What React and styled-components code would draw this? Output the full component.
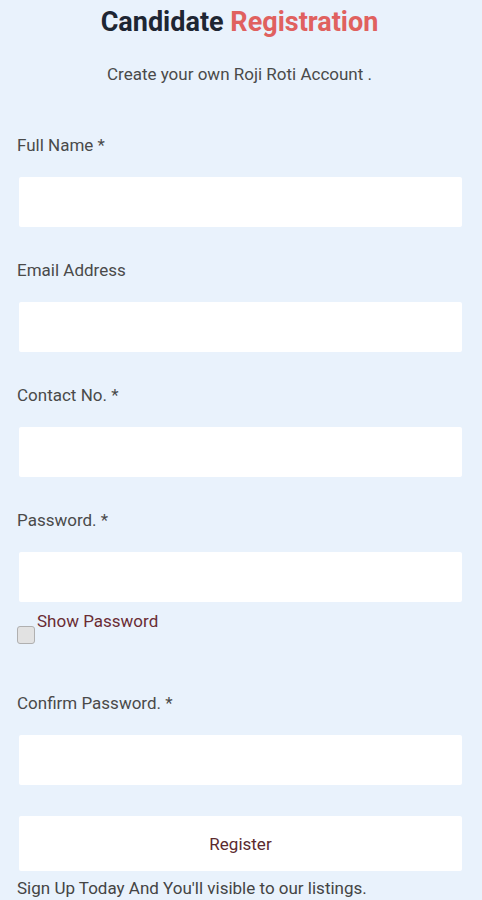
import React, {useState} from 'react'
import styled, {createGlobalStyle} from 'styled-components'

const GlobalStyle = createGlobalStyle`
  body {
    margin: 0;
    background: #e9f2fc;
    font-family: Roboto, "Liberation Sans", sans-serif;
  }
`

function App() {
  const [show, setShow] = useState(false);
  return (
    <Page>
      <GlobalStyle />
      <Title>Candidate <span>Registration</span></Title>
      <Subtitle>Create your own Roji Roti Account .</Subtitle>

      <Field>
        <Label>Full Name *</Label>
        <Input type="text" />
      </Field>
      <Field>
        <Label>Email Address</Label>
        <Input type="email" />
      </Field>
      <Field>
        <Label>Contact No. *</Label>
        <Input type="tel" />
      </Field>
      <Field>
        <Label>Password. *</Label>
        <Input type={show ? 'text' : 'password'} />
      </Field>
      <ShowRow>
        <Check type="checkbox" checked={show} onChange={() => setShow(!show)} />
        <ShowText>Show Password</ShowText>
      </ShowRow>
      <Field tight>
        <Label>Confirm Password. *</Label>
        <Input type="password" />
      </Field>

      <Button>Register</Button>
      <Footer>Sign Up Today And You'll visible to our listings.</Footer>
    </Page>
  )
}

export default App

const Page = styled.div`
  padding: 0 20px 0 17px;
  height: 900px;
  overflow: hidden;
  box-sizing: border-box;
`

const Title = styled.h1`
  margin: 0;
  padding-top: 6px;
  text-align: center;
  font-size: 27px;
  line-height: 32px;
  font-weight: 700;
  color: #1e2633;
  span {
    color: #e0615f;
  }
`

const Subtitle = styled.p`
  margin: 26px 0 0;
  text-align: center;
  font-size: 17px;
  line-height: 20px;
  color: #4a4a4a;
`

const Field = styled.div`
  display: flex;
  flex-direction: column;
  margin-top: ${props => props.tight ? '49px' : '51px'};
  & + & {
    margin-top: 33px;
  }
`

const Label = styled.label`
  font-size: 17px;
  line-height: 20px;
  color: #4a4a4a;
`

const Input = styled.input`
  margin: 22px 0 0 2px;
  height: 50px;
  border: none;
  background: #fff;
  border-radius: 2px;
  outline: none;
  box-sizing: border-box;
`

const ShowRow = styled.div`
  display: flex;
  align-items: flex-start;
`

const Check = styled.input`
  appearance: none;
  width: 18px;
  height: 18px;
  margin: 24px 2px 0 0;
  border: 1px solid #b0b0b0;
  border-radius: 3px;
  background: #e2e2e2;
  box-sizing: border-box;
`

const ShowText = styled.span`
  margin-top: 9px;
  font-size: 17px;
  line-height: 20px;
  color: #6a2c34;
`

const Button = styled.button`
  display: block;
  width: calc(100% - 2px);
  margin: 31px 0 0 2px;
  height: 55px;
  border: none;
  background: #fff;
  border-radius: 2px;
  font-family: Roboto, "Liberation Sans", sans-serif;
  font-size: 17px;
  color: #5b2a2e;
`

const Footer = styled.p`
  margin: 7px 0 0;
  font-size: 17px;
  line-height: 20px;
  color: #444;
`
